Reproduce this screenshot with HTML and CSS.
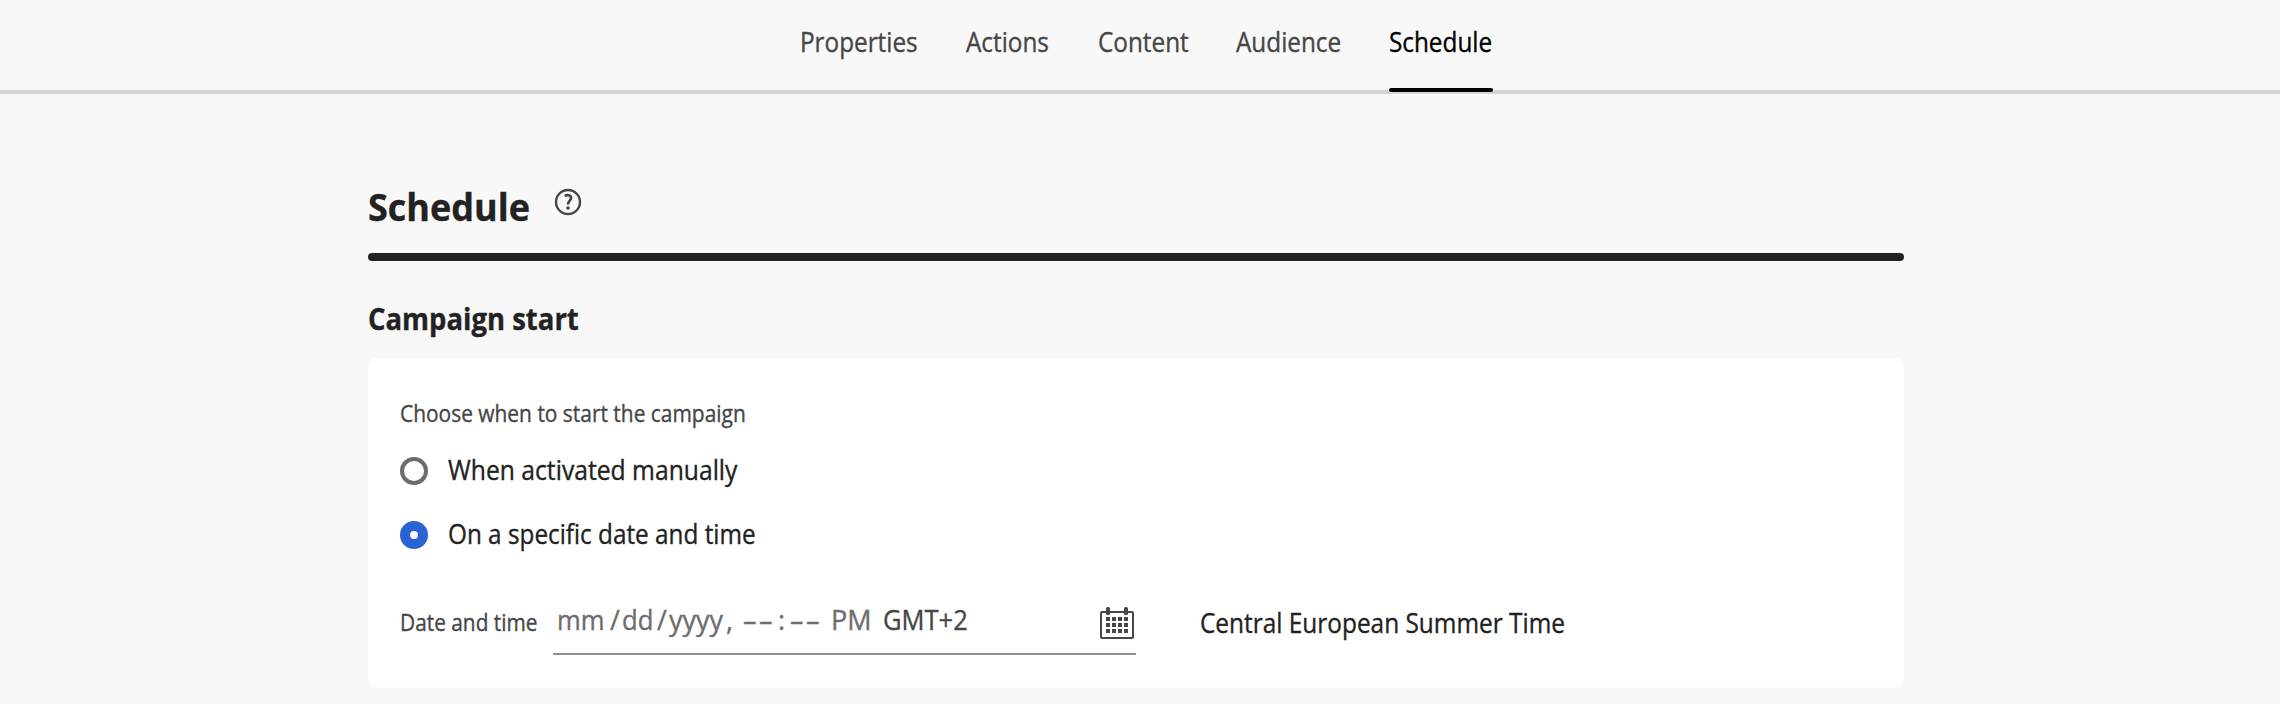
FILE: index.html
```html
<!DOCTYPE html>
<html lang="en">
<head>
<meta charset="utf-8">
<title>Schedule</title>
<link rel="stylesheet" href="styles.css">
</head>
<body>
<nav class="tabs">
  <a class="tab"><span class="fit">Properties</span></a>
  <a class="tab"><span class="fit">Actions</span></a>
  <a class="tab"><span class="fit">Content</span></a>
  <a class="tab"><span class="fit">Audience</span></a>
  <a class="tab tab-active"><span class="fit">Schedule</span></a>
</nav>
<main class="page">
  <header class="page-head">
    <h1 class="title fit">Schedule</h1>
    <svg class="help" viewBox="0 0 28 28" width="28" height="28" fill="none" stroke="#464646">
      <circle cx="14" cy="14" r="12" stroke-width="2.4"/>
      <path d="M10.8 8C12.5 6.8 17 6.6 17 10C17 12.6 14 12.7 14 16.6" stroke-width="2.7"/>
      <circle cx="14" cy="20" r="1.8" fill="#464646" stroke="none"/>
    </svg>
  </header>
  <div class="rule"></div>
  <h2 class="subtitle fit">Campaign start</h2>
  <section class="card">
    <p class="legend fit">Choose when to start the campaign</p>
    <label class="option"><span class="radio"></span><span class="fit option-manual">When activated manually</span></label>
    <label class="option"><span class="radio radio-on"></span><span class="fit option-date">On a specific date and time</span></label>
    <div class="row">
      <span class="label"><span class="fit">Date and time</span></span>
      <div class="field">
        <div class="segments">
          <span class="fit seg-month">mm</span><span class="slash">/</span><span class="fit seg-month">dd</span><span class="slash">/</span><span>yyyy</span><span>,</span><span class="dashes">––</span><span>:</span><span class="dashes">––</span><span>PM</span><span class="fit zone">GMT+2</span>
        </div>
        <svg class="calendar" viewBox="0 0 34 32" width="34" height="32" fill="#464646">
          <rect x="1" y="5" width="32" height="26" rx="1" fill="none" stroke="#464646" stroke-width="2"/>
          <rect x="6" y="0" width="4" height="8" rx="1.5"/><rect x="24" y="0" width="4" height="8" rx="1.5"/>
          <path d="M6 10h4v4h-4zM12 10h4v4h-4zM18 10h4v4h-4zM24 10h4v4h-4zM6 16h4v4h-4zM12 16h4v4h-4zM18 16h4v4h-4zM24 16h4v4h-4zM6 22h4v4h-4zM12 22h4v4h-4zM18 22h4v4h-4zM24 22h4v4h-4z"/>
        </svg>
      </div>
      <span class="fit timezone">Central European Summer Time</span>
    </div>
  </section>
</main>
</body>
</html>
```
FILE: styles.css
```css
* { box-sizing: border-box; }
body {
  margin: 0;
  height: 704px;
  overflow: hidden;
  background: #f8f8f8;
  color: #222;
  font: 450 27px/40px "Open Sans", "Noto Sans", sans-serif;
  white-space: nowrap;
  -webkit-text-stroke: .35px currentColor;
}
/* Slightly narrowed letterforms; --sx is the horizontal ratio. */
.fit { display: block; transform: scaleX(var(--sx, .9)); transform-origin: 0 0; }
.tabs {
  display: grid;
  grid-template-columns: 118px 84px 90px 105px 104px;
  column-gap: 48px;
  height: 94px;
  padding: 22px 0 0 800px;
  border-bottom: 4px solid #d5d5d5;
  color: #464646;
}
.tab { height: 70px; }
.tab-active { position: relative; color: #000; }
.tab-active::after {
  content: "";
  position: absolute;
  left: 0;
  bottom: 0;
  width: 100%;
  height: 4px;
  border-radius: 2px;
  background: #000;
}
.page { width: 1536px; margin-left: 368px; padding-top: 88px; }
.page-head { display: flex; gap: 24px; height: 71px; }
.title { --sx: .947; width: 162px; margin: 0; font-size: 38px; line-height: 48px; font-weight: 700; }
.help { margin-top: 6px; }
.rule { height: 8px; border-radius: 4px; background: #222; }
.subtitle { --sx: .916; width: 240px; margin: 38px 0 19px; font-size: 30px; line-height: 40px; font-weight: 700; }
.card { height: 329px; padding: 39px 32px 0; border-radius: 8px; background: #fff; }
.legend { --sx: .898; margin: 0 0 21px; font-size: 23.3px; line-height: 32px; color: #464646; }
.option { display: flex; gap: 20px; height: 64px; }
.radio { width: 28px; height: 28px; margin-top: 7px; border: 4px solid #6d6d6d; border-radius: 50%; }
.radio-on { border: 10px solid #2a63d6; }
.option-manual { --sx: .914; }
.option-date { --sx: .9; }
.row { display: flex; margin-top: 17px; }
.label { width: 153px; padding-top: 11px; font-size: 23.3px; line-height: 32px; color: #464646; }
.label .fit { --sx: .895; }
.field {
  display: flex;
  justify-content: space-between;
  width: 583px;
  height: 60px;
  padding: 5px 2px 0 4px;
  border-bottom: 2px solid #909090;
}
.segments {
  display: grid;
  grid-template-columns: 51px 14px 33px 14px 57px 17px 35px 12px 41px 52px 90px;
  color: #6d6d6d;
}
.seg-month { --sx: .95; }
.slash { padding-left: 2px; }
.dashes { letter-spacing: 2.5px; }
.zone { --sx: .945; color: #464646; }
.calendar { margin-top: 7px; }
.timezone { --sx: .904; margin-left: 64px; padding-top: 8px; }
```
